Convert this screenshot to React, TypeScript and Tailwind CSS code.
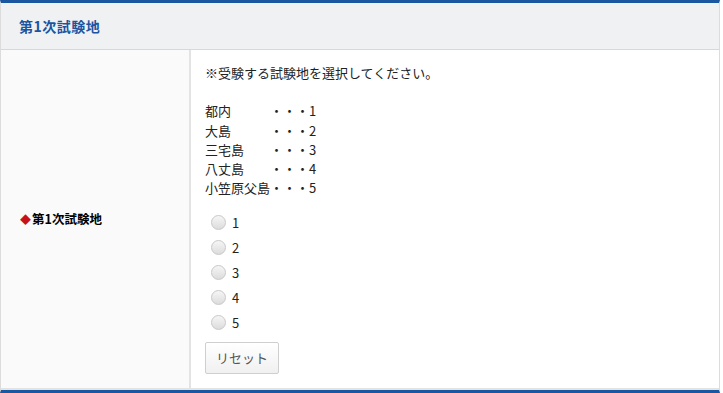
import { useState } from 'react'

const places = [
  { name: '都内', no: '1' },
  { name: '大島', no: '2' },
  { name: '三宅島', no: '3' },
  { name: '八丈島', no: '4' },
  { name: '小笠原父島', no: '5' },
]

function pad(name: string) {
  return name + '\u3000'.repeat(5 - name.length)
}

export default function App() {
  const [picked, setPicked] = useState<string | null>(null)

  return (
    <div
      className="w-[723px] h-[393px] bg-white text-[13px] text-[#222]"
      style={{ fontFamily: '"Noto Sans CJK JP", "Noto Sans", sans-serif' }}
    >
      <div className="w-[720px] border-t-[3px] border-t-[#1b56a0] border-x border-x-[#dcdcdc] border-b-[3px] border-b-[#1b56a0]">
        {/* section header */}
        <div className="h-[47px] flex items-center pl-[18px] bg-[#eff1f3] border-b border-[#d8d8d8]">
          <h2 className="text-[14px] font-bold text-[#1b55a0] tracking-[0.5px]">第1次試験地</h2>
        </div>

        {/* row */}
        <div className="flex border-b-2 border-[#e3e3e3]">
          <div className="w-[190px] shrink-0 bg-[#fafafa] border-r-2 border-[#e3e3e3] flex items-center pl-[19px]">
            <span className="text-[#c8101a] text-[11px] mr-[1px]">◆</span>
            <span className="font-bold text-[12.5px] text-black">第1次試験地</span>
          </div>

          <div className="flex-1 pl-[14px] pt-[13px] pb-[14px] leading-[19.3px]">
            <p>※受験する試験地を選択してください。</p>
            <p className="mt-[19px] whitespace-pre">
              {places.map(p => (
                <span key={p.no} className="block">
                  {pad(p.name)}・・・{p.no}
                </span>
              ))}
            </p>

            <div className="mt-[12px] flex flex-col">
              {places.map(p => (
                <label key={p.no} className="h-[25px] flex items-center pl-[6px] gap-[6px] cursor-pointer">
                  <input
                    type="radio"
                    name="place"
                    checked={picked === p.no}
                    onChange={() => setPicked(p.no)}
                    className="appearance-none w-[15px] h-[15px] rounded-full border border-[#c8c8c8] bg-gradient-to-b from-[#f6f6f6] to-[#dcdcdc] checked:bg-[#1b56a0]"
                  />
                  <span>{p.no}</span>
                </label>
              ))}
            </div>

            <button
              type="button"
              onClick={() => setPicked(null)}
              className="mt-[7px] w-[74px] h-[32px] border border-[#cfcfcf] rounded-[2px] bg-gradient-to-b from-white to-[#f0f0f0] text-[#555] text-[13px]"
            >
              リセット
            </button>
          </div>
        </div>
      </div>
    </div>
  )
}
